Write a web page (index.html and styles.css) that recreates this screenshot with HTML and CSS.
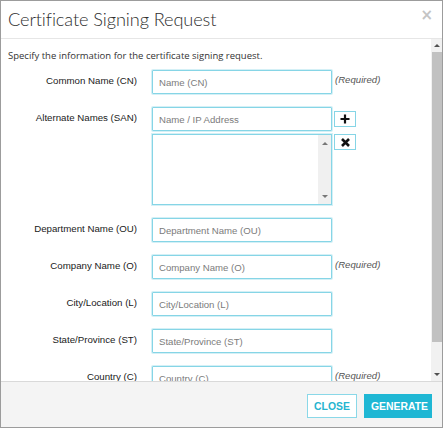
FILE: index.html
```html
<!DOCTYPE html>
<html>
<head>
<meta charset="utf-8">
<link rel="stylesheet" href="styles.css">
</head>
<body>
<div class="dialog">
  <div class="header">
    <h1 class="title">Certificate Signing Request</h1>
    <span class="x">&times;</span>
  </div>
  <div class="body">
    <div class="content">
      <p class="intro">Specify the information for the certificate signing request.</p>

      <div class="row">
        <label class="label">Common Name (CN)</label>
        <input class="input" type="text" placeholder="Name (CN)">
        <span class="req">(Required)</span>
      </div>

      <div class="row">
        <label class="label">Alternate Names (SAN)</label>
        <div class="stack">
          <input class="input" type="text" placeholder="Name / IP Address">
          <div class="listbox">
            <div class="listbox-area"></div>
            <div class="mini-scroll">
              <span class="tri-up small"></span>
              <span class="tri-down small"></span>
            </div>
          </div>
        </div>
        <div class="btns">
          <button class="icon-btn"><svg width="10" height="10" viewBox="0 0 10 10"><path d="M5 0.5V9.5M0.5 5H9.5" stroke="#111" stroke-width="2.2"/></svg></button>
          <button class="icon-btn"><svg width="9" height="9" viewBox="0 0 9 9"><path d="M1 1L8 8M8 1L1 8" stroke="#111" stroke-width="2.6"/></svg></button>
        </div>
      </div>

      <div class="row">
        <label class="label">Department Name (OU)</label>
        <input class="input" type="text" placeholder="Department Name (OU)">
      </div>

      <div class="row">
        <label class="label">Company Name (O)</label>
        <input class="input" type="text" placeholder="Company Name (O)">
        <span class="req">(Required)</span>
      </div>

      <div class="row">
        <label class="label">City/Location (L)</label>
        <input class="input" type="text" placeholder="City/Location (L)">
      </div>

      <div class="row">
        <label class="label">State/Province (ST)</label>
        <input class="input" type="text" placeholder="State/Province (ST)">
      </div>

      <div class="row">
        <label class="label">Country (C)</label>
        <input class="input" type="text" placeholder="Country (C)">
        <span class="req">(Required)</span>
      </div>
    </div>
    <div class="scrollbar">
      <div class="sb-btn"><span class="tri-up"></span></div>
      <div class="sb-track"><div class="sb-thumb"></div></div>
      <div class="sb-btn"><span class="tri-down"></span></div>
    </div>
  </div>
  <div class="footer">
    <button class="btn btn-close">CLOSE</button>
    <button class="btn btn-gen">GENERATE</button>
  </div>
</div>
</body>
</html>
```

FILE: styles.css
```css
* { box-sizing: border-box; }
html, body { margin: 0; padding: 0; background: #fff; }
body { width: 443px; height: 428px; overflow: hidden; }

.dialog {
  width: 443px;
  height: 428px;
  border: 1px solid #9c9c9c;
  display: flex;
  flex-direction: column;
  background: #fff;
}

.header {
  height: 38px;
  flex: none;
  border-bottom: 1px solid #e6e6e6;
  display: flex;
  align-items: center;
  justify-content: space-between;
  padding: 0 9px 2px 7px;
}
.title {
  margin: 0;
  font-family: Lato, "Open Sans", sans-serif;
  font-weight: 300;
  font-size: 18.2px;
  color: #2e2e2e;
  letter-spacing: -0.1px;
}
.x {
  font-family: "DejaVu Sans", sans-serif;
  font-size: 15px;
  font-weight: bold;
  color: #c4c4c4;
  line-height: 1;
  margin-top: -6px;
}

.body {
  height: 342px;
  flex: none;
  display: flex;
  overflow: hidden;
}
.content {
  flex: 1;
  padding: 10px 0 0 7px;
  overflow: hidden;
}
.intro {
  margin: 0 0 7px;
  font-family: "Open Sans", sans-serif;
  font-size: 9.5px;
  line-height: 14px;
  color: #333;
}

.row {
  display: flex;
  align-items: flex-start;
  margin-bottom: 13px;
}
.label {
  width: 129px;
  flex: none;
  text-align: right;
  font-family: "Liberation Sans", Arial, sans-serif;
  font-size: 9.7px;
  line-height: 21px;
  color: #1a1a1a;
  margin-right: 15px;
}
.input {
  width: 180px;
  height: 24px;
  flex: none;
  margin: 0;
  border: 1px solid #86d5e6;
  box-shadow: 0 0 0 1px #d4f0f6;
  border-radius: 1px;
  padding: 0 6px;
  font-family: "Liberation Sans", Arial, sans-serif;
  font-size: 9.6px;
  color: #333;
  background: #fff;
  outline: none;
}
.input::placeholder { color: #7b7b7b; }
.req {
  margin-left: 3px;
  font-family: "Liberation Sans", Arial, sans-serif;
  font-style: italic;
  font-size: 9.6px;
  line-height: 20px;
  color: #555;
}

.stack {
  display: flex;
  flex-direction: column;
  gap: 3px;
  width: 180px;
  flex: none;
}
.listbox {
  height: 71px;
  border: 1px solid #86d5e6;
  box-shadow: 0 0 0 1px #d4f0f6;
  display: flex;
  background: #fff;
}
.listbox-area { flex: 1; }
.mini-scroll {
  width: 13px;
  background: #f0f0f0;
  display: flex;
  flex-direction: column;
  justify-content: space-between;
  align-items: center;
  padding: 7px 0 6px;
}

.btns {
  display: flex;
  flex-direction: column;
  gap: 7px;
  margin: 4px 0 0 2px;
}
.icon-btn {
  width: 22px;
  height: 16px;
  padding: 0;
  margin: 0;
  border: 1px solid #86d5e6;
  background: #fff;
  display: flex;
  align-items: center;
  justify-content: center;
}

.tri-up, .tri-down {
  display: block;
  width: 0;
  height: 0;
  border-left: 3px solid transparent;
  border-right: 3px solid transparent;
}
.tri-up { border-bottom: 3px solid #505050; }
.tri-down { border-top: 3px solid #505050; }
.tri-up.small { border-bottom-color: #777; }
.tri-down.small { border-top-color: #777; }

.scrollbar {
  width: 11px;
  flex: none;
  display: flex;
  flex-direction: column;
  background: #f1f1f1;
}
.sb-btn {
  height: 13px;
  flex: none;
  display: flex;
  align-items: center;
  justify-content: center;
  background: #f1f1f1;
}
.sb-track {
  flex: 1;
  padding: 0 0 26px 1px;
  display: flex;
}
.sb-thumb {
  flex: 1;
  background: #c1c1c1;
}

.footer {
  flex: 1;
  border-top: 1px solid #d9d9d9;
  background: #f4f4f4;
  display: flex;
  justify-content: flex-end;
  align-items: flex-start;
  gap: 7px;
  padding: 12px 10px 0 0;
}
.btn {
  height: 24px;
  margin: 0;
  font-family: "Liberation Sans Narrow", "Liberation Sans", Arial, sans-serif;
  font-stretch: condensed;
  font-weight: bold;
  font-size: 10.4px;
  cursor: pointer;
}
.btn-close {
  width: 50px;
  background: #fff;
  color: #25b4cf;
  border: 1px solid #8ad8e8;
}
.btn-gen {
  width: 68px;
  background: #1fb7d4;
  color: #fff;
  border: 1px solid #1fb7d4;
}
```
